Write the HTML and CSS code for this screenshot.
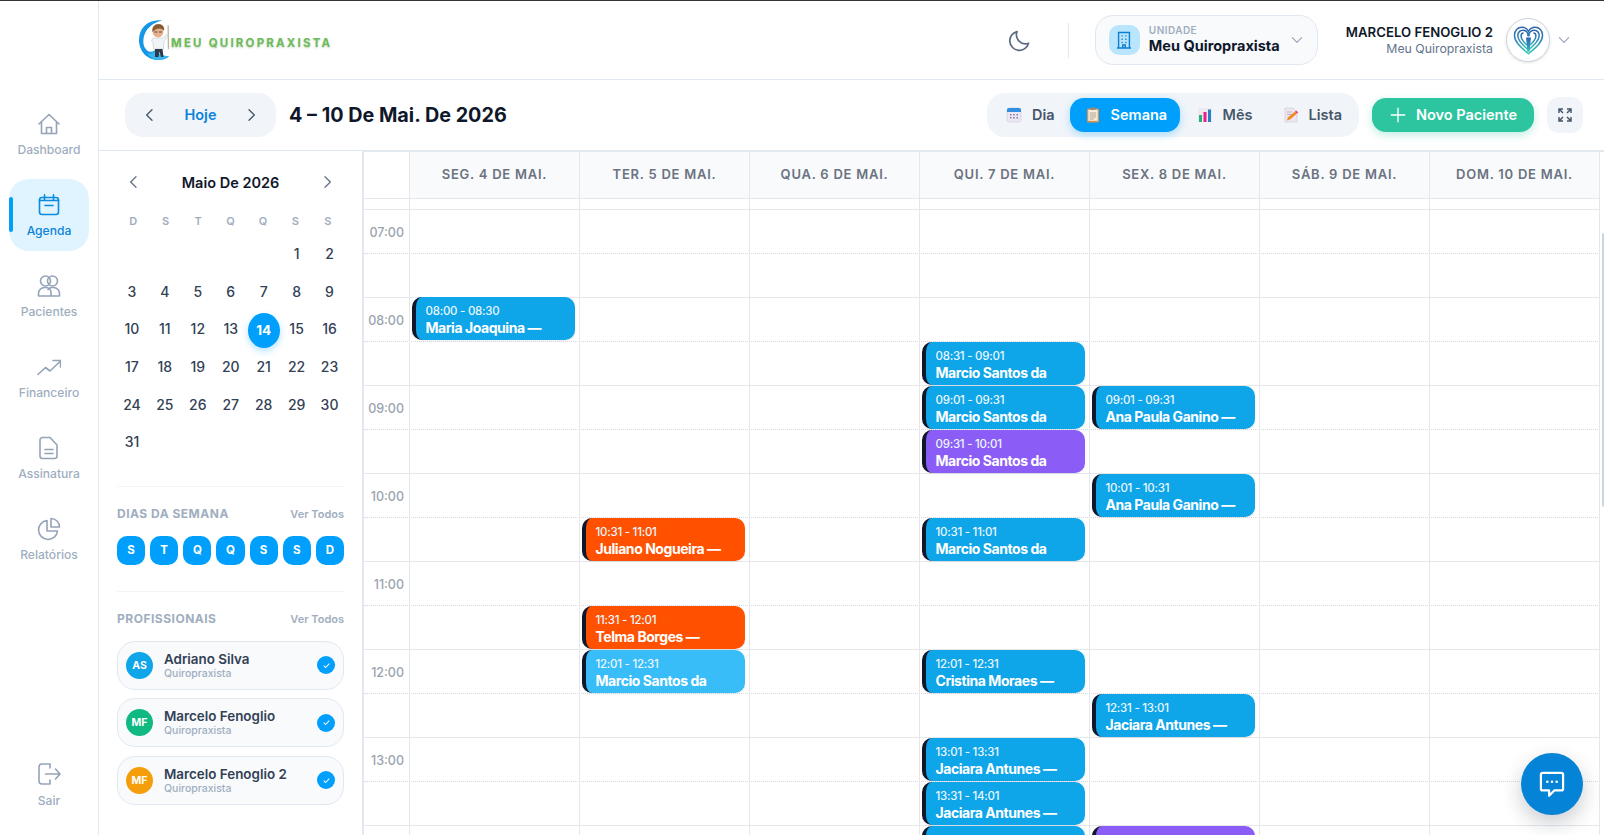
FILE: index.html
```html
<!DOCTYPE html>
<html lang="pt-BR">
<head>
<meta charset="utf-8">
<title>Meu Quiropraxista - Agenda</title>
<link rel="stylesheet" href="styles.css">
</head>
<body>
<div class="app">
  <aside class="sidebar">
    <a class="nav-item">
      <svg class="nav-icon" viewBox="0 0 24 24"><path d="M2 12 12 2.500 22 12M4.500 10v11.500h15V10M9.500 21.500V15.500h5v6"/></svg>
      <span>Dashboard</span>
    </a>
    <a class="nav-item active">
      <svg class="nav-icon" viewBox="0 0 24 24"><rect x="2.500" y="4.500" width="19" height="17" rx="2.500"/><path d="M7.500 1.800v5M16.500 1.800v5M2.500 7.500h19M8 12.500h8"/></svg>
      <span>Agenda</span>
    </a>
    <a class="nav-item">
      <svg class="nav-icon" viewBox="0 0 24 24"><circle cx="8.500" cy="7" r="5"/><circle cx="15.500" cy="7" r="5"/><path d="M1.500 22v-2.500a6 6 0 0 1 6-6H9a5 5 0 0 1 5 5V22zM14 22h8.500v-2.500a6 6 0 0 0-6-6H15a5 5 0 0 0-4 2"/></svg>
      <span>Pacientes</span>
    </a>
    <a class="nav-item">
      <svg class="nav-icon" viewBox="0 0 24 24"><path d="M1 19.500 8.500 12.500l4.500 3.500L23 6.500M16 5.500h7.500V12"/></svg>
      <span>Financeiro</span>
    </a>
    <a class="nav-item">
      <svg class="nav-icon" viewBox="0 0 24 24"><path d="M5.500 1.500H13l7 7.500v11a2.500 2.500 0 0 1-2.500 2.500h-12A2.500 2.500 0 0 1 3 20V4a2.500 2.500 0 0 1 2.500-2.500zM8 13.500h8M8 17.500h8"/></svg>
      <span>Assinatura</span>
    </a>
    <a class="nav-item">
      <svg class="nav-icon" viewBox="0 0 24 24"><path d="M10 3.500a9.500 9.500 0 1 0 10.500 10.500H10zM14 1.500a8.500 8.500 0 0 1 8.500 8.500H14z"/></svg>
      <span>Relatórios</span>
    </a>
    <a class="nav-item logout">
      <svg class="nav-icon" viewBox="0 0 24 24"><path d="M13 2H5a3 3 0 0 0-3 3v14a3 3 0 0 0 3 3h8M8.500 12H23M18.500 7l4.500 5-4.500 5M13 2v4M13 18v4"/></svg>
      <span>Sair</span>
    </a>
  </aside>

  <div class="main">
    <header class="topbar">
      <div class="logo">
        <svg class="logo-mark" viewBox="0 0 36 42">
          <path d="M24 1.500C10 0 1 9 1 21c0 11 8 20 19 20 5 0 9-1.500 11-4-6 1-11-1-14-6-4 4-9 1-11-4C3.500 17 9 5 24 1.500z" fill="#1597e5"/>
          <path d="M9 34c4 1.500 7 0 8.500-3 3 4 8 6 13.500 6-2 2.500-6 4-11 4-4 0-8-3-11-7z" fill="#38b6ee"/>
          <path d="M29.500 6.500 30.800 6.200 31 30l-1.200.2z" fill="#b9b2a8"/>
          <path d="M15 19h10l3.500-3.500 1 1L26 23l-.5 7h-10l-.5-6-1.500-2z" fill="#f1f4f6" stroke="#aab4bd" stroke-width=".4"/>
          <path d="M17 30h7.500l1 8H23l-1.500-5.500L20.500 38H17z" fill="#2f3a4a"/>
          <circle cx="20" cy="13" r="5.400" fill="#e6b08a"/>
          <path d="M14.500 13c-1-5 2-8 6-8s6.500 3 5.500 7c-1.500-3-7-4-11.500 1z" fill="#8a5a34"/>
          <path d="M16.500 13h3M21 13h3" stroke="#3a3a3a" stroke-width=".8"/>
        </svg>
        <span class="logo-text">MEU QUIROPRAXISTA</span>
      </div>
      <div class="top-actions">
        <svg class="moon" viewBox="0 0 24 24"><path d="M20.500 15.200A9 9 0 0 1 9 3.600a9.500 9.500 0 1 0 11.500 11.600z"/></svg>
        <span class="vsep"></span>
        <div class="unit">
          <span class="unit-icon">
            <svg viewBox="0 0 24 24"><path d="M5.500 21.500V3h13v18.500M3.500 21.500h17M9 7h1.500M13.500 7H15M9 11h1.500M13.500 11H15M9 15h1.500M13.500 15H15M10.500 21.500v-3.500h3v3.500"/></svg>
          </span>
          <span class="unit-text">
            <small>UNIDADE</small>
            <b>Meu Quiropraxista</b>
          </span>
          <svg class="chev-down" viewBox="0 0 24 24"><path d="m4 8 8 8 8-8"/></svg>
        </div>
        <div class="user">
          <span class="user-text">
            <b>MARCELO FENOGLIO 2</b>
            <small>Meu Quiropraxista</small>
          </span>
          <span class="user-avatar">
            <svg viewBox="0 0 40 40">
              <defs><linearGradient id="hg" x1="0" y1="0" x2="0" y2="1"><stop offset="0" stop-color="#2b63ad"/><stop offset=".55" stop-color="#2f8fb8"/><stop offset="1" stop-color="#2fc9b5"/></linearGradient></defs>
              <path d="M20 36C9 27 3 21 3 13.500 3 8 7 4 12 4c3.500 0 6.500 2 8 5 1.500-3 4.500-5 8-5 5 0 9 4 9 9.500C37 21 31 27 20 36z" fill="none" stroke="url(#hg)" stroke-width="1.800"/>
              <path d="M20 31.500C12 25 7 20 7 14c0-4 3-6.500 6-6.500 3 0 5.500 2 7 5.500 1.500-3.500 4-5.500 7-5.500 3 0 6 2.500 6 6.500 0 6-5 11-13 17.500z" fill="none" stroke="url(#hg)" stroke-width="1.800"/>
              <path d="M20 27c-5-4-9-8-9-12.500 0-2.500 1.500-3.500 3-3.500M20 27c5-4 9-8 9-12.500 0-2.500-1.500-3.500-3-3.500" fill="none" stroke="url(#hg)" stroke-width="1.800"/>
              <circle cx="20" cy="13.500" r="1.800" fill="#2f7fb8"/>
              <path d="M17 16.500h6l-1 9-.5 8h-3l-.5-8z" fill="url(#hg)"/>
            </svg>
          </span>
          <svg class="chev-down" viewBox="0 0 24 24"><path d="m4 8 8 8 8-8"/></svg>
        </div>
      </div>
    </header>

    <div class="toolbar">
      <div class="date-nav">
        <svg class="chev" viewBox="0 0 24 24"><path d="m15 4-8 8 8 8"/></svg>
        <span class="today lbl">Hoje</span>
        <svg class="chev" viewBox="0 0 24 24"><path d="m9 4 8 8-8 8"/></svg>
      </div>
      <h1 class="range">4 – 10 De Mai. De 2026</h1>
      <div class="views">
        <span class="view day">
          <svg class="emoji" viewBox="0 0 16 16"><rect x="1" y="1" width="14" height="14" rx="2" fill="#ece7f3" stroke="#cfc8dc" stroke-width=".6"/><path d="M1 3a2 2 0 0 1 2-2h10a2 2 0 0 1 2 2v2H1z" fill="#2f8fe0"/><path d="M4 7h1.500v1.500H4zM7.200 7h1.500v1.500H7.200zM10.500 7H12v1.500h-1.500zM4 10h1.500v1.500H4zM7.200 10h1.500v1.500H7.200zM10.500 10H12v1.500h-1.500z" fill="#7d78a8"/></svg>
          <span class="lbl">Dia</span>
        </span>
        <span class="view current">
          <svg class="emoji" viewBox="0 0 16 16"><rect x="2" y="1.500" width="12" height="14" rx="1.200" fill="#d6934f"/><rect x="3.300" y="2.800" width="9.400" height="11" fill="#f4ede0"/><rect x="5.500" y=".6" width="5" height="2.500" rx=".6" fill="#9b8a78"/><path d="M4.800 6h6.400M4.800 8h6.400M4.800 10h6.400M4.800 12h4" stroke="#b7a48c"/></svg>
          <span class="lbl">Semana</span>
        </span>
        <span class="view month">
          <svg class="emoji" viewBox="0 0 16 16"><rect x="1" y="1" width="14" height="14" fill="#ece9ef"/><rect x="2" y="8" width="3" height="7" fill="#1fb574"/><rect x="6.500" y="5" width="3" height="10" fill="#ec1f8e"/><rect x="11" y="2.500" width="3" height="12.500" fill="#2a7fc9"/></svg>
          <span class="lbl">Mês</span>
        </span>
        <span class="view">
          <svg class="emoji" viewBox="0 0 16 16"><path d="M2 1h8l4 4v10H2z" fill="#ece7f0" stroke="#cfc8d6" stroke-width=".6"/><path d="M4 5h5M4 7.500h6" stroke="#b9b2c6"/><path d="m4 13.500.8-3L12 4.500l2 2-7 6z" fill="#f28a23"/><path d="m12 4.500 1.200-1 2 2-1.200 1z" fill="#ea3a6a"/></svg>
          <span class="lbl">Lista</span>
        </span>
      </div>
      <button class="new-btn">
        <svg viewBox="0 0 24 24"><path d="M12 3v18M3 12h18"/></svg>
        <span class="lbl">Novo Paciente</span>
      </button>
      <button class="expand-btn">
        <svg viewBox="0 0 24 24"><path d="M3 9V3h6M3 3l6 6M21 9V3h-6M21 3l-6 6M3 15v6h6M3 21l6-6M21 15v6h-6M21 21l-6-6"/></svg>
      </button>
    </div>

    <div class="content">
      <section class="panel">
        <div class="month-head">
          <svg class="chev sm" viewBox="0 0 24 24"><path d="m15 4-8 8 8 8"/></svg>
          <span>Maio De 2026</span>
          <svg class="chev sm" viewBox="0 0 24 24"><path d="m9 4 8 8-8 8"/></svg>
        </div>
        <div class="weekdays"><span>D</span><span>S</span><span>T</span><span>Q</span><span>Q</span><span>S</span><span>S</span></div>
        <div class="days">
          <span class="first">1</span><span>2</span>
          <span>3</span><span>4</span><span>5</span><span>6</span><span>7</span><span>8</span><span>9</span>
          <span>10</span><span>11</span><span>12</span><span>13</span><span><b class="selected">14</b></span><span>15</span><span>16</span>
          <span>17</span><span>18</span><span>19</span><span>20</span><span>21</span><span>22</span><span>23</span>
          <span>24</span><span>25</span><span>26</span><span>27</span><span>28</span><span>29</span><span>30</span>
          <span>31</span>
        </div>
        <hr class="rule first-rule">
        <div class="group-head"><b>DIAS DA SEMANA</b><span>Ver Todos</span></div>
        <div class="chips"><span>S</span><span>T</span><span>Q</span><span>Q</span><span>S</span><span>S</span><span>D</span></div>
        <hr class="rule">
        <div class="group-head"><b>PROFISSIONAIS</b><span>Ver Todos</span></div>
        <div class="pros">
          <div class="pro">
            <span class="pro-avatar sky">AS</span>
            <span class="pro-text"><b>Adriano Silva</b><small>Quiropraxista</small></span>
            <span class="check"><svg viewBox="0 0 24 24"><path d="m6 12.500 4 4 8-8.500"/></svg></span>
          </div>
          <div class="pro">
            <span class="pro-avatar green">MF</span>
            <span class="pro-text"><b>Marcelo Fenoglio</b><small>Quiropraxista</small></span>
            <span class="check"><svg viewBox="0 0 24 24"><path d="m6 12.500 4 4 8-8.500"/></svg></span>
          </div>
          <div class="pro">
            <span class="pro-avatar amber">MF</span>
            <span class="pro-text"><b>Marcelo Fenoglio 2</b><small>Quiropraxista</small></span>
            <span class="check"><svg viewBox="0 0 24 24"><path d="m6 12.500 4 4 8-8.500"/></svg></span>
          </div>
        </div>
      </section>

      <section class="calendar">
        <div class="grid">
          <div class="corner"></div>
          <div class="dayhead">SEG. 4 DE MAI.</div>
          <div class="dayhead">TER. 5 DE MAI.</div>
          <div class="dayhead">QUA. 6 DE MAI.</div>
          <div class="dayhead">QUI. 7 DE MAI.</div>
          <div class="dayhead">SEX. 8 DE MAI.</div>
          <div class="dayhead">SÁB. 9 DE MAI.</div>
          <div class="dayhead">DOM. 10 DE MAI.</div>

          <div class="slots">
            <div class="spacer"></div>
            <div class="slot half"><span>07:00</span></div><div class="slot"></div>
            <div class="slot half"><span>08:00</span></div><div class="slot"></div>
            <div class="slot half"><span>09:00</span></div><div class="slot"></div>
            <div class="slot half"><span>10:00</span></div><div class="slot"></div>
            <div class="slot half"><span>11:00</span></div><div class="slot"></div>
            <div class="slot half"><span>12:00</span></div><div class="slot"></div>
            <div class="slot half"><span>13:00</span></div><div class="slot"></div>
            <div class="slot half"></div>
          </div>

          <div class="vline" style="grid-column:1"></div>
          <div class="vline" style="grid-column:2"></div>
          <div class="vline" style="grid-column:3"></div>
          <div class="vline" style="grid-column:4"></div>
          <div class="vline" style="grid-column:5"></div>
          <div class="vline" style="grid-column:6"></div>
          <div class="vline" style="grid-column:7"></div>
          <div class="vline" style="grid-column:8"></div>

          <div class="event on-hour" style="grid-column:2;grid-row:5"><small>08:00 - 08:30</small><b>Maria Joaquina —</b></div>

          <div class="event orange" style="grid-column:3;grid-row:10"><small>10:31 - 11:01</small><b>Juliano Nogueira —</b></div>
          <div class="event orange" style="grid-column:3;grid-row:12"><small>11:31 - 12:01</small><b>Telma Borges —</b></div>
          <div class="event light" style="grid-column:3;grid-row:13"><small>12:01 - 12:31</small><b>Marcio Santos da</b></div>

          <div class="event" style="grid-column:5;grid-row:6"><small>08:31 - 09:01</small><b>Marcio Santos da</b></div>
          <div class="event" style="grid-column:5;grid-row:7"><small>09:01 - 09:31</small><b>Marcio Santos da</b></div>
          <div class="event purple" style="grid-column:5;grid-row:8"><small>09:31 - 10:01</small><b>Marcio Santos da</b></div>
          <div class="event" style="grid-column:5;grid-row:10"><small>10:31 - 11:01</small><b>Marcio Santos da</b></div>
          <div class="event" style="grid-column:5;grid-row:13"><small>12:01 - 12:31</small><b>Cristina Moraes —</b></div>
          <div class="event" style="grid-column:5;grid-row:15"><small>13:01 - 13:31</small><b>Jaciara Antunes —</b></div>
          <div class="event" style="grid-column:5;grid-row:16"><small>13:31 - 14:01</small><b>Jaciara Antunes —</b></div>
          <div class="event" style="grid-column:5;grid-row:17"></div>

          <div class="event" style="grid-column:6;grid-row:7"><small>09:01 - 09:31</small><b>Ana Paula Ganino —</b></div>
          <div class="event" style="grid-column:6;grid-row:9"><small>10:01 - 10:31</small><b>Ana Paula Ganino —</b></div>
          <div class="event" style="grid-column:6;grid-row:14"><small>12:31 - 13:01</small><b>Jaciara Antunes —</b></div>
          <div class="event purple" style="grid-column:6;grid-row:17"></div>
        </div>
      </section>
    </div>
  </div>
</div>
<span class="scroll-thumb"></span>
<button class="fab">
  <svg viewBox="0 0 24 24"><path d="M4 2.500h16A1.500 1.500 0 0 1 21.500 4v12a1.500 1.500 0 0 1-1.500 1.500h-6L9.500 22v-4.500H4A1.500 1.500 0 0 1 2.500 16V4A1.500 1.500 0 0 1 4 2.500z"/><path class="dots" d="M8 10h.01M12 10h.01M16 10h.01"/></svg>
</button>
</body>
</html>
```
FILE: styles.css
```css
* { box-sizing: border-box; }
html, body { margin: 0; height: 100%; }
body {
  height: 835px;
  overflow: hidden;
  background: #fff;
  border-top: 1px solid #333;
  font-family: Inter, "Liberation Sans", sans-serif;
  color: #0f172a;
  position: relative;
}
svg { display: block; }
.app { display: flex; height: 834px; }
.lbl { margin-bottom: 2px; }

/* sidebar */
.sidebar {
  width: 99px;
  flex: none;
  border-right: 1px solid #e2e8f0;
  padding: 97px 9px 15px;
  display: flex;
  flex-direction: column;
  gap: 9px;
}
.nav-item {
  position: relative;
  height: 72px;
  padding-top: 2px;
  border-radius: 20px;
  display: flex;
  flex-direction: column;
  align-items: center;
  justify-content: center;
  gap: 6px;
  font-size: 12.100px;
  line-height: 16px;
  font-weight: 500;
  color: #a0aec0;
}
.nav-icon { width: 24px; height: 24px; fill: none; stroke: #94a3b8; stroke-width: 1.600; stroke-linecap: round; stroke-linejoin: round; }
.nav-item.active { background: #e0f4ff; color: #0b82dc; }
.nav-item.active .nav-icon { stroke: #0b8be0; }
.nav-item.active::before {
  content: "";
  position: absolute;
  left: 0;
  top: 18px;
  width: 4px;
  height: 35px;
  border-radius: 3px;
  background: #009ffb;
}
.logout { margin-top: auto; gap: 7px; }

/* main */
.main { flex: 1; min-width: 0; display: flex; flex-direction: column; }
.topbar {
  height: 79px;
  flex: none;
  border-bottom: 1px solid #e2e8f0;
  display: flex;
  align-items: center;
  justify-content: space-between;
  padding: 0 33px 0 39px;
}
.logo { display: flex; align-items: center; }
.logo-mark { width: 36px; height: 42px; }
.logo-text {
  margin: 6px 0 0 -3px;
  font-size: 11.500px;
  font-weight: 700;
  letter-spacing: 2.200px;
  color: #6dbb58;
  text-shadow: 0 1px 2px rgba(80, 120, 70, .35);
}
.top-actions { display: flex; align-items: center; }
.moon { width: 24px; height: 24px; fill: none; stroke: #5b6b80; stroke-width: 1.700; stroke-linejoin: round; margin-right: 36px; }
.vsep { width: 1px; height: 35px; background: #e2e8f0; margin-right: 26px; }
.unit {
  width: 223px;
  height: 50px;
  border: 1px solid #e2e8f0;
  border-radius: 18px;
  background: #f8fafc;
  display: flex;
  align-items: center;
  padding-left: 13px;
  margin-right: 28px;
}
.unit-icon {
  width: 31px;
  height: 30px;
  border-radius: 10px;
  background: #bae6fd;
  display: flex;
  align-items: center;
  justify-content: center;
  margin-right: 9px;
}
.unit-icon svg { width: 20px; height: 20px; fill: none; stroke: #0b7fd0; stroke-width: 1.700; }
.unit-text { display: flex; flex-direction: column; }
.unit-text small { font-size: 10px; line-height: 12px; font-weight: 600; letter-spacing: .45px; color: #a0aec0; }
.unit-text b { font-size: 14.500px; line-height: 20px; font-weight: 700; color: #0f172a; }
.chev-down { width: 14px; height: 14px; fill: none; stroke: #94a3b8; stroke-width: 1.800; stroke-linecap: round; stroke-linejoin: round; margin-left: 10px; }
.user { display: flex; align-items: center; }
.user-text { display: flex; flex-direction: column; align-items: flex-end; margin-right: 13px; }
.user-text b { font-size: 13.200px; line-height: 18px; font-weight: 600; color: #0f172a; }
.user-text small { font-size: 12.300px; line-height: 16px; color: #64748b; }
.user-avatar {
  width: 44px;
  height: 44px;
  border-radius: 50%;
  border: 1px solid #cbd5e1;
  background: #fff;
  box-shadow: 0 1px 3px rgba(15, 23, 42, .12);
  display: flex;
  align-items: center;
  justify-content: center;
}
.user-avatar svg { width: 33px; height: 33px; }
.user .chev-down { margin-left: 7px; }

/* toolbar */
.toolbar {
  height: 71px;
  flex: none;
  border-bottom: 1px solid #e2e8f0;
  display: flex;
  align-items: center;
  padding: 0 21px 0 26px;
}
.date-nav {
  width: 151px;
  height: 44px;
  border-radius: 18px;
  background: #f1f5f9;
  display: flex;
  align-items: center;
  justify-content: space-between;
  padding: 0 17px;
}
.chev { width: 16px; height: 16px; fill: none; stroke: #475569; stroke-width: 2; stroke-linecap: round; stroke-linejoin: round; }
.chev.sm { stroke: #64748b; }
.today { font-size: 14.500px; font-weight: 600; color: #0b82dc; }
.range { margin: 0 0 0 13px; font-size: 19.800px; font-weight: 700; color: #0f172a; }
.views {
  margin-left: auto;
  height: 44px;
  width: 372px;
  border-radius: 18px;
  background: #f1f5f9;
  display: flex;
  align-items: center;
  gap: 16px;
  padding-left: 19px;
  font-size: 14.500px;
  font-weight: 600;
  color: #475569;
}
.view { flex: none; display: flex; align-items: center; gap: 10px; height: 34px; }
.view.day { margin-right: -1px; }
.view.month { margin-right: 14px; }
.emoji { width: 16px; height: 16px; }
.view.current {
  width: 110px;
  margin-right: 1px;
  padding-left: 15px;
  border-radius: 14px;
  background: #009ffb;
  color: #fff;
  box-shadow: 0 3px 8px rgba(0, 159, 251, .3);
}
.new-btn {
  margin-left: 13px;
  width: 162px;
  height: 34px;
  border: 0;
  border-radius: 14px;
  background: #2cc5a0;
  color: #fff;
  font: 600 14.500px Inter, "Liberation Sans", sans-serif;
  display: flex;
  align-items: center;
  justify-content: center;
  gap: 9px;
  box-shadow: 0 3px 8px rgba(44, 197, 160, .3);
}
.new-btn svg { width: 18px; height: 18px; fill: none; stroke: #fff; stroke-width: 1.800; stroke-linecap: round; }
.expand-btn {
  margin-left: 13px;
  width: 36px;
  height: 36px;
  border: 0;
  border-radius: 12px;
  background: #f1f5f9;
  display: flex;
  align-items: center;
  justify-content: center;
  padding: 0;
}
.expand-btn svg { width: 16px; height: 16px; fill: none; stroke: #475569; stroke-width: 2.200; }

/* content */
.content { flex: 1; min-height: 0; display: flex; overflow: hidden; }
.panel { width: 263px; flex: none; padding: 19px 18px 0; }
.month-head {
  height: 24px;
  display: flex;
  align-items: center;
  justify-content: space-between;
  padding: 0 9px;
  font-size: 14.500px;
  font-weight: 600;
  color: #0f172a;
}
.weekdays, .days { display: grid; grid-template-columns: repeat(7, 1fr); text-align: center; }
.weekdays { margin-top: 19px; height: 16px; line-height: 16px; font-size: 11px; font-weight: 600; color: #a0aec0; }
.days { margin: 6px -2px 0 -1.500px; grid-auto-rows: 37.600px; font-size: 14px; font-weight: 500; color: #334155; }
.days span { display: flex; align-items: center; justify-content: center; }
.days .first { grid-column-start: 6; }
.selected {
  width: 32px;
  height: 35px;
  margin-top: 3px;
  border-radius: 50%;
  background: #009ffb;
  color: #fff;
  font-weight: 700;
  font-size: 13.500px;
  display: flex;
  align-items: center;
  justify-content: center;
  box-shadow: 0 3px 7px rgba(0, 159, 251, .3);
}
.rule { border: 0; border-top: 1px solid #f1f5f9; margin: 26px 0 0; }
.rule.first-rule { margin-top: 25px; }
.group-head {
  margin-top: 19px;
  height: 16px;
  display: flex;
  align-items: center;
  justify-content: space-between;
  color: #a0aec0;
}
.group-head b { font-size: 12px; font-weight: 700; letter-spacing: .5px; }
.group-head span { font-size: 11px; font-weight: 600; }
.chips { margin-top: 14px; display: flex; gap: 5px; }
.chips span {
  flex: 1;
  height: 29px;
  border-radius: 10px;
  background: #009ffb;
  color: #fff;
  font-size: 11.500px;
  font-weight: 700;
  display: flex;
  align-items: center;
  justify-content: center;
}
.pros { margin-top: 14px; display: flex; flex-direction: column; gap: 8.500px; }
.pro {
  height: 49px;
  border: 1px solid #e2e8f0;
  border-radius: 18px;
  background: #f8fafc;
  display: flex;
  align-items: center;
  padding: 0 8px;
}
.pro-avatar {
  width: 27px;
  height: 27px;
  border-radius: 50%;
  color: #fff;
  font-size: 10.500px;
  font-weight: 700;
  display: flex;
  align-items: center;
  justify-content: center;
  flex: none;
}
.sky { background: #0ea5e9; }
.green { background: #10b981; }
.amber { background: #f59e0b; }
.pro-text { flex: 1; margin-left: 11px; display: flex; flex-direction: column; }
.pro-text b { font-size: 13.400px; line-height: 16px; font-weight: 600; color: #334155; }
.pro-text small { font-size: 10.500px; line-height: 13px; font-weight: 500; color: #a0aec0; }
.check {
  width: 18px;
  height: 18px;
  border-radius: 50%;
  background: #009ffb;
  display: flex;
  align-items: center;
  justify-content: center;
}
.check svg { width: 11px; height: 11px; fill: none; stroke: #fff; stroke-width: 2.200; }

/* calendar */
.calendar { flex: 1; min-width: 0; border-left: 2px solid #e2e8f0; border-top: 1px solid #e2e8f0; overflow: hidden; }
.grid {
  display: grid;
  grid-template-columns: 46px repeat(7, 170px);
  grid-template-rows: 47px 11px repeat(15, 44px);
}
.corner, .dayhead { background: #f8fafc; border-right: 1px solid #e5e7eb; border-bottom: 1px solid #e5e7eb; }
.corner { background: #fff; }
.dayhead {
  font-size: 13px;
  font-weight: 600;
  letter-spacing: .75px;
  color: #6b7280;
  text-align: center;
  line-height: 44px;
}
.slots { grid-column: 1 / -1; grid-row: 2 / -1; display: flex; flex-direction: column; }
.spacer { height: 11px; flex: none; border-bottom: 1px solid #e5e7eb; }
.slot { height: 44px; flex: none; border-bottom: 1px solid #e5e7eb; }
.slot.half { border-bottom: 1px dotted #d5d9df; }
.slot span {
  display: block;
  width: 40px;
  padding-top: 15px;
  text-align: right;
  font-size: 12.500px;
  line-height: 16px;
  font-weight: 500;
  color: #9ca3af;
}
.vline { grid-row: 2 / -1; border-right: 1px solid #e5e7eb; }
.event {
  height: 43px;
  margin: 0 5px 0 2px;
  min-width: 0;
  border-left: 4px solid #0f172a;
  border-radius: 10px;
  background: #0ea5e9;
  color: #fff;
  padding: 6.500px 0 0 9.500px;
  overflow: hidden;
  white-space: nowrap;
  display: flex;
  flex-direction: column;
  box-shadow: 0 1px 2px rgba(15, 23, 42, .08);
  z-index: 1;
}
.event.on-hour { margin-top: -1px; }
.event small { font-size: 11.500px; line-height: 15px; font-weight: 500; letter-spacing: -.25px; color: #eaf7fe; }
.event b { font-size: 14px; line-height: 18.500px; font-weight: 700; letter-spacing: -.45px; }
.orange { background: #ff5100; }
.light { background: #38bdf8; }
.purple { background: #8b5cf6; }

/* overlays */
.scroll-thumb { position: absolute; top: 232px; right: 0; width: 2px; height: 274px; border-radius: 2px 0 0 2px; background: #cbd5e1; }
.fab {
  position: absolute;
  left: 1521px;
  top: 752px;
  width: 62px;
  height: 62px;
  border: 0;
  border-radius: 50%;
  background: #0583d6;
  box-shadow: 0 8px 20px rgba(15, 23, 42, .22);
  display: flex;
  align-items: center;
  justify-content: center;
  padding: 0;
}
.fab svg { width: 28px; height: 28px; fill: none; stroke: #fff; stroke-width: 1.900; stroke-linejoin: round; }
.fab .dots { stroke-width: 2.200; stroke-linecap: round; }
```
